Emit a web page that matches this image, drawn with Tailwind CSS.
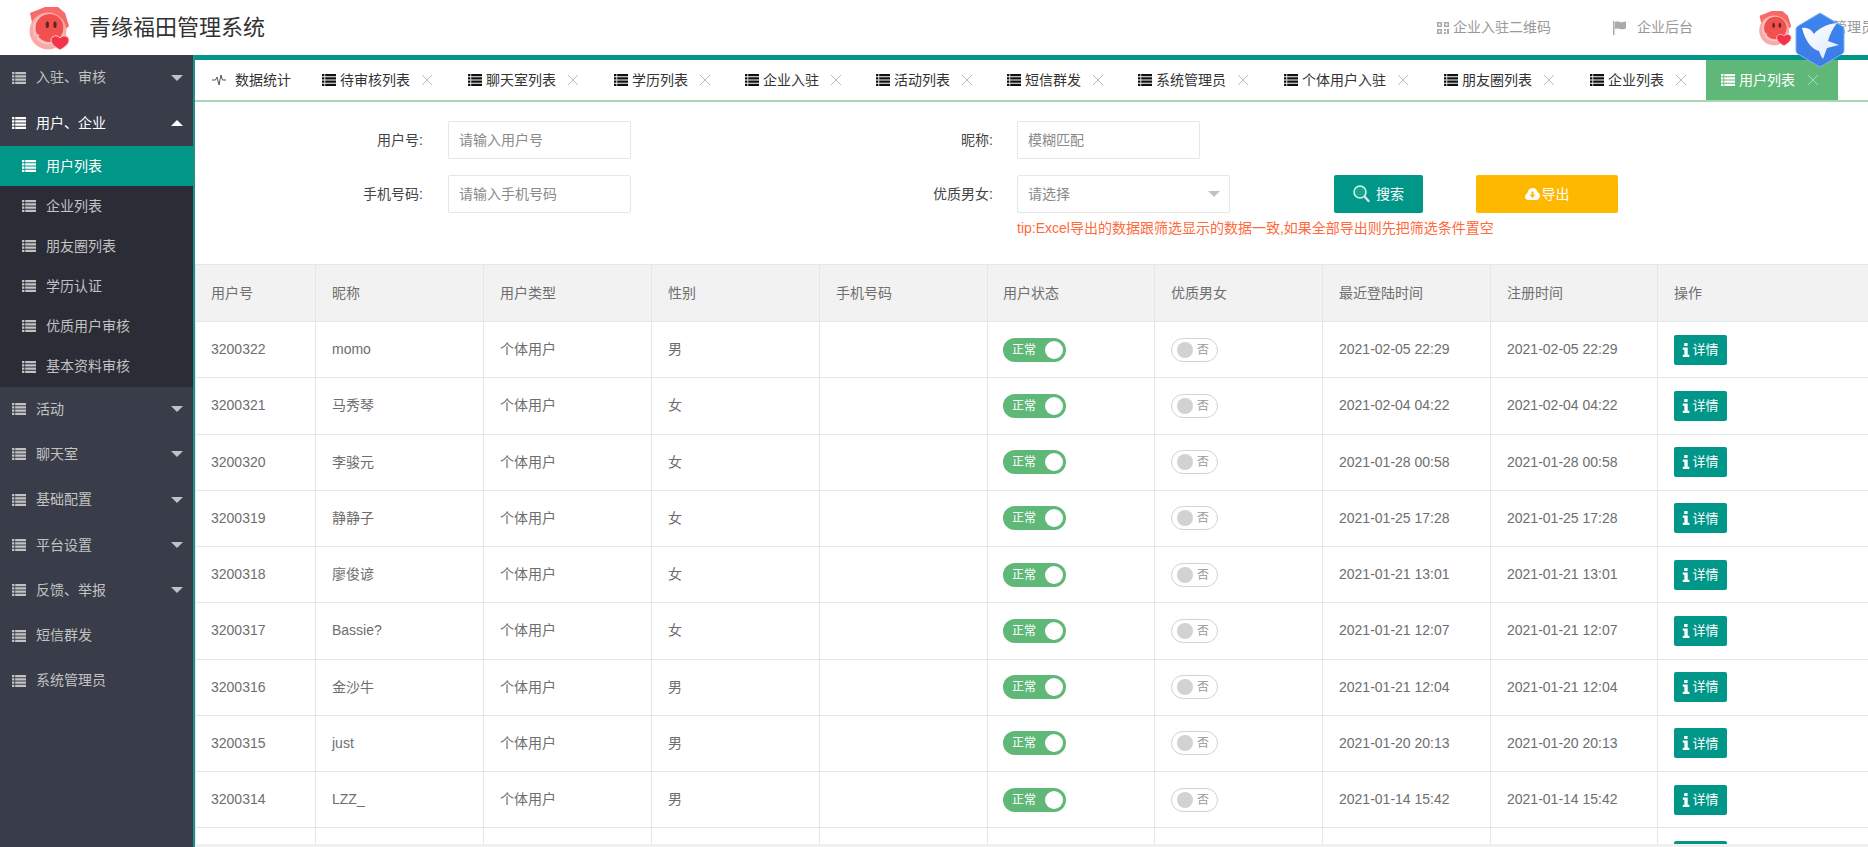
<!DOCTYPE html>
<html lang="zh">
<head>
<meta charset="utf-8">
<title>青缘福田管理系统</title>
<script src="https://cdn.jsdelivr.net/npm/@tailwindcss/browser@4"></script>
</head>
<body class="m-0 bg-white">
<svg class="hidden" width="0" height="0">
  <symbol id="list" viewBox="0 0 14 12"><path fill="currentColor" d="M0 0h2.400v2.200H0zM3.200 0H14v2.200H3.200zM0 3.200h2.400v2.200H0zM3.200 3.200H14v2.200H3.200zM0 6.500h2.400v2.200H0zM3.200 6.500H14v2.200H3.200zM0 9.700h2.400V12H0zM3.200 9.700H14V12H3.200z"/></symbol>
  <symbol id="info" viewBox="0 0 8 14"><path fill="currentColor" d="M2.200 0h3.400v3H2.200zM.8 4.600h4.900v7.200H7.400V14H.8v-2.200h1.600V6.800H.8z"/></symbol>
  <symbol id="logo" viewBox="0 0 42 44">
    <path fill="#f76a6a" d="M2 7 17 1h13l7 6 4 13-6 6H6z"/>
    <circle cx="20" cy="25" r="18.500" fill="#fba8a8"/>
    <circle cx="20.500" cy="23" r="15.500" fill="#f9c6c6"/>
    <circle cx="21.500" cy="22" r="14" fill="#f24f4f"/>
    <circle cx="9" cy="30" r="2.200" fill="#fbb4b4"/>
    <ellipse cx="19.300" cy="18.700" rx="1.600" ry="3.200" fill="#5a2626"/>
    <ellipse cx="27" cy="18.700" rx="1.600" ry="3.200" fill="#5a2626"/>
    <path fill="#f2334a" stroke="#ffd0d0" d="M32 44c-5-3-9-6-9-10 0-4 6-6 9-2 3-4 9-2 9 2 0 4-4 7-9 10z"/>
  </symbol>
</svg>
<div class="w-[1868px] h-[847px] overflow-hidden relative flex flex-col text-[14px] text-[#6e6e6e] font-['Liberation_Sans','Noto_Sans_CJK_SC',sans-serif]">

  <!-- header -->
  <header class="h-[55px] shrink-0 flex items-center bg-white">
    <svg class="w-[42px] h-[44px] ml-[28px]"><use href="#logo"/></svg>
    <h1 class="ml-[19px] text-[22px] leading-none font-normal text-[#333]">青缘福田管理系统</h1>
    <div class="ml-auto flex items-center text-[#999]">
      <svg class="w-[12px] h-[12px]" viewBox="0 0 12 12"><path fill="#aaa" d="M0 0h5v5H0zM7 0h5v5H7zM0 7h5v5H0zM7 7h2v2H7zM10 7h2v5h-2zM7 10h2v2H7z"/><path fill="#fff" d="M1.500 1.500h2v2h-2zM8.500 1.500h2v2h-2zM1.500 8.500h2v2h-2z"/></svg>
      <span class="ml-[4px]">企业入驻二维码</span>
      <svg class="ml-[61px] w-[15px] h-[14px]" viewBox="0 0 15 14"><path fill="#aaa" d="M1 0h1.500v14H1zM3 1c3-1.500 5 1 8 0l3-.500v7c-3 1.500-6 .5-8 0-1-.2-2 0-3 .5z"/></svg>
      <span class="ml-[10px]">企业后台</span>
      <svg class="ml-[65px] w-[34px] h-[36px]"><use href="#logo"/></svg>
      <span class="ml-[41px] w-[35px] whitespace-nowrap">管理员</span>
    </div>
  </header>

  <div class="flex-1 flex min-h-0">
    <!-- sidebar -->
    <aside class="w-[195px] shrink-0 bg-[#393d49] border-r-2 border-[#1f8f88] text-[#c2c2c2]">
      <a class="h-[45.4px] flex items-center pl-[12px] pr-[10px] gap-[10px]"><svg class="w-[14px] h-[12px]"><use href="#list"/></svg><span>入驻、审核</span><span class="ml-auto w-0 h-0 border-x-[6px] border-x-transparent border-t-[6px] border-t-[#c2c2c2]"></span></a>
      <a class="h-[45.6px] flex items-center pl-[12px] pr-[10px] gap-[10px] text-white"><svg class="w-[14px] h-[12px]"><use href="#list"/></svg><span>用户、企业</span><span class="ml-auto w-0 h-0 border-x-[6px] border-x-transparent border-b-[6px] border-b-white"></span></a>
      <div class="bg-[#2a2c36]">
        <a class="h-[40.1px] flex items-center pl-[22px] gap-[10px] bg-[#009688] text-white"><svg class="w-[14px] h-[12px]"><use href="#list"/></svg><span>用户列表</span></a>
        <a class="h-[40.1px] flex items-center pl-[22px] gap-[10px]"><svg class="w-[14px] h-[12px]"><use href="#list"/></svg><span>企业列表</span></a>
        <a class="h-[40.1px] flex items-center pl-[22px] gap-[10px]"><svg class="w-[14px] h-[12px]"><use href="#list"/></svg><span>朋友圈列表</span></a>
        <a class="h-[40.1px] flex items-center pl-[22px] gap-[10px]"><svg class="w-[14px] h-[12px]"><use href="#list"/></svg><span>学历认证</span></a>
        <a class="h-[40.1px] flex items-center pl-[22px] gap-[10px]"><svg class="w-[14px] h-[12px]"><use href="#list"/></svg><span>优质用户审核</span></a>
        <a class="h-[40.1px] flex items-center pl-[22px] gap-[10px]"><svg class="w-[14px] h-[12px]"><use href="#list"/></svg><span>基本资料审核</span></a>
      </div>
      <a class="h-[45.3px] flex items-center pl-[12px] pr-[10px] gap-[10px]"><svg class="w-[14px] h-[12px]"><use href="#list"/></svg><span>活动</span><span class="ml-auto w-0 h-0 border-x-[6px] border-x-transparent border-t-[6px] border-t-[#c2c2c2]"></span></a>
      <a class="h-[45.3px] flex items-center pl-[12px] pr-[10px] gap-[10px]"><svg class="w-[14px] h-[12px]"><use href="#list"/></svg><span>聊天室</span><span class="ml-auto w-0 h-0 border-x-[6px] border-x-transparent border-t-[6px] border-t-[#c2c2c2]"></span></a>
      <a class="h-[45.3px] flex items-center pl-[12px] pr-[10px] gap-[10px]"><svg class="w-[14px] h-[12px]"><use href="#list"/></svg><span>基础配置</span><span class="ml-auto w-0 h-0 border-x-[6px] border-x-transparent border-t-[6px] border-t-[#c2c2c2]"></span></a>
      <a class="h-[45.3px] flex items-center pl-[12px] pr-[10px] gap-[10px]"><svg class="w-[14px] h-[12px]"><use href="#list"/></svg><span>平台设置</span><span class="ml-auto w-0 h-0 border-x-[6px] border-x-transparent border-t-[6px] border-t-[#c2c2c2]"></span></a>
      <a class="h-[45.3px] flex items-center pl-[12px] pr-[10px] gap-[10px]"><svg class="w-[14px] h-[12px]"><use href="#list"/></svg><span>反馈、举报</span><span class="ml-auto w-0 h-0 border-x-[6px] border-x-transparent border-t-[6px] border-t-[#c2c2c2]"></span></a>
      <a class="h-[45.3px] flex items-center pl-[12px] gap-[10px]"><svg class="w-[14px] h-[12px]"><use href="#list"/></svg><span>短信群发</span></a>
      <a class="h-[45.3px] flex items-center pl-[12px] gap-[10px]"><svg class="w-[14px] h-[12px]"><use href="#list"/></svg><span>系统管理员</span></a>
    </aside>

    <main class="flex-1 min-w-0 flex flex-col border-t-[5px] border-[#009688]">
      <!-- tabs -->
      <nav class="h-[42px] shrink-0 flex border-b-2 border-[#a6d8b4] text-[#333] whitespace-nowrap">
        <div class="w-[112px] flex items-center pl-[17px] gap-[9px]"><svg class="w-[14px] h-[12px] text-[#555]" viewBox="0 0 14 12"><path fill="none" stroke="currentColor" d="M0 6h3.500l1.500-3 2 8 2-10 1.500 5H14"/></svg><span>数据统计</span></div>
        <div class="w-[146px] flex items-center pl-[15px] gap-[4px]"><svg class="w-[14px] h-[12px] text-[#111]"><use href="#list"/></svg><span>待审核列表</span><svg class="w-[10px] h-[10px] ml-[8px] text-[#bbb]" viewBox="0 0 10 10"><path stroke="currentColor" d="M0 0l10 10M10 0 0 10"/></svg></div>
        <div class="w-[146px] flex items-center pl-[15px] gap-[4px]"><svg class="w-[14px] h-[12px] text-[#111]"><use href="#list"/></svg><span>聊天室列表</span><svg class="w-[10px] h-[10px] ml-[8px] text-[#bbb]" viewBox="0 0 10 10"><path stroke="currentColor" d="M0 0l10 10M10 0 0 10"/></svg></div>
        <div class="w-[131px] flex items-center pl-[15px] gap-[4px]"><svg class="w-[14px] h-[12px] text-[#111]"><use href="#list"/></svg><span>学历列表</span><svg class="w-[10px] h-[10px] ml-[8px] text-[#bbb]" viewBox="0 0 10 10"><path stroke="currentColor" d="M0 0l10 10M10 0 0 10"/></svg></div>
        <div class="w-[131px] flex items-center pl-[15px] gap-[4px]"><svg class="w-[14px] h-[12px] text-[#111]"><use href="#list"/></svg><span>企业入驻</span><svg class="w-[10px] h-[10px] ml-[8px] text-[#bbb]" viewBox="0 0 10 10"><path stroke="currentColor" d="M0 0l10 10M10 0 0 10"/></svg></div>
        <div class="w-[131px] flex items-center pl-[15px] gap-[4px]"><svg class="w-[14px] h-[12px] text-[#111]"><use href="#list"/></svg><span>活动列表</span><svg class="w-[10px] h-[10px] ml-[8px] text-[#bbb]" viewBox="0 0 10 10"><path stroke="currentColor" d="M0 0l10 10M10 0 0 10"/></svg></div>
        <div class="w-[131px] flex items-center pl-[15px] gap-[4px]"><svg class="w-[14px] h-[12px] text-[#111]"><use href="#list"/></svg><span>短信群发</span><svg class="w-[10px] h-[10px] ml-[8px] text-[#bbb]" viewBox="0 0 10 10"><path stroke="currentColor" d="M0 0l10 10M10 0 0 10"/></svg></div>
        <div class="w-[146px] flex items-center pl-[15px] gap-[4px]"><svg class="w-[14px] h-[12px] text-[#111]"><use href="#list"/></svg><span>系统管理员</span><svg class="w-[10px] h-[10px] ml-[8px] text-[#bbb]" viewBox="0 0 10 10"><path stroke="currentColor" d="M0 0l10 10M10 0 0 10"/></svg></div>
        <div class="w-[160px] flex items-center pl-[15px] gap-[4px]"><svg class="w-[14px] h-[12px] text-[#111]"><use href="#list"/></svg><span>个体用户入驻</span><svg class="w-[10px] h-[10px] ml-[8px] text-[#bbb]" viewBox="0 0 10 10"><path stroke="currentColor" d="M0 0l10 10M10 0 0 10"/></svg></div>
        <div class="w-[146px] flex items-center pl-[15px] gap-[4px]"><svg class="w-[14px] h-[12px] text-[#111]"><use href="#list"/></svg><span>朋友圈列表</span><svg class="w-[10px] h-[10px] ml-[8px] text-[#bbb]" viewBox="0 0 10 10"><path stroke="currentColor" d="M0 0l10 10M10 0 0 10"/></svg></div>
        <div class="w-[131px] flex items-center pl-[15px] gap-[4px]"><svg class="w-[14px] h-[12px] text-[#111]"><use href="#list"/></svg><span>企业列表</span><svg class="w-[10px] h-[10px] ml-[8px] text-[#bbb]" viewBox="0 0 10 10"><path stroke="currentColor" d="M0 0l10 10M10 0 0 10"/></svg></div>
        <div class="w-[132px] h-[40px] flex items-center pl-[15px] gap-[4px] bg-[#5fb878] text-white"><svg class="w-[14px] h-[12px]"><use href="#list"/></svg><span>用户列表</span><svg class="w-[10px] h-[10px] ml-[9px] text-[#a9dcb8]" viewBox="0 0 10 10"><path stroke="currentColor" d="M0 0l10 10M10 0 0 10"/></svg></div>
      </nav>

      <div class="flex-1 min-h-0 overflow-hidden">
        <!-- filter form -->
        <form class="h-[162px] pt-[19px]">
          <div class="flex items-center h-[38px]">
            <label class="w-[228px] text-right text-[#444]">用户号:</label>
            <input class="ml-[25px] w-[183px] h-[38px] px-[10px] border border-[#e6e6e6] rounded-[2px] outline-none placeholder:text-[#8a8a8a]" placeholder="请输入用户号">
            <label class="w-[362px] text-right text-[#444]">昵称:</label>
            <input class="ml-[24px] w-[183px] h-[38px] px-[10px] border border-[#e6e6e6] rounded-[2px] outline-none placeholder:text-[#8a8a8a]" placeholder="模糊匹配">
          </div>
          <div class="flex items-center h-[38px] mt-[16px]">
            <label class="w-[228px] text-right text-[#444]">手机号码:</label>
            <input class="ml-[25px] w-[183px] h-[38px] px-[10px] border border-[#e6e6e6] rounded-[2px] outline-none placeholder:text-[#8a8a8a]" placeholder="请输入手机号码">
            <label class="w-[362px] text-right text-[#444]">优质男女:</label>
            <div class="ml-[24px] w-[213px] h-[38px] px-[10px] pr-[9px] flex items-center justify-between border border-[#e6e6e6] rounded-[2px] text-[#8a8a8a]"><span>请选择</span><span class="w-0 h-0 border-x-[6px] border-x-transparent border-t-[6px] border-t-[#c2c2c2]"></span></div>
            <button type="button" class="ml-[104px] w-[89px] h-[38px] flex items-center justify-center gap-[6px] bg-[#009688] rounded-[2px] text-white"><svg class="w-[17px] h-[18px]" viewBox="0 0 17 18"><circle cx="7" cy="7" r="6" fill="#14a594" stroke="#d8f0ec" stroke-width="1.600"/><path stroke="#cfeee8" stroke-width="2.400" stroke-linecap="round" d="M12 12l3.500 4"/></svg><span>搜索</span></button>
            <button type="button" class="ml-[53px] w-[142px] h-[38px] flex items-center justify-center gap-[2px] bg-[#ffb800] rounded-[2px] text-white"><svg class="w-[15px] h-[12px]" viewBox="0 0 15 12"><path fill="#fff" d="M3.500 12C1.500 12 0 10.500 0 8.700 0 7.200 1 6 2.300 5.600 2.500 3 4.500 0 7.800 0c2.500 0 4.400 1.800 4.700 4.200 1.500.4 2.500 1.800 2.500 3.500C15 10 13.200 12 11 12z"/><path fill="#ffb800" d="M6.500 3.500h2v3.200h2L7.500 10 4.500 6.700h2z"/></svg><span>导出</span></button>
          </div>
          <p class="ml-[822px] mt-[5px] h-[20px] leading-[20px] text-[#ff6a3c] whitespace-nowrap">tip:Excel导出的数据跟筛选显示的数据一致,如果全部导出则先把筛选条件置空</p>
        </form>

        <!-- table -->
        <table class="w-[1673px] table-fixed border-collapse [&_th]:h-[57px] [&_th]:bg-[#f2f2f2] [&_th]:font-normal [&_th]:text-left [&_th]:pl-[16px] [&_th:first-child]:pl-[15px] [&_th:nth-child(6)]:pl-[15px] [&_th]:border [&_th]:border-[#e6e6e6] [&_td]:h-[56.25px] [&_td]:pl-[16px] [&_td:first-child]:pl-[15px] [&_td:nth-child(6)]:pl-[15px] [&_td]:border [&_td]:border-[#e6e6e6]">
          <colgroup><col class="w-[120px]"><col class="w-[168px]"><col class="w-[168px]"><col class="w-[168px]"><col class="w-[168px]"><col class="w-[167px]"><col class="w-[168px]"><col class="w-[168px]"><col class="w-[167px]"><col class="w-[211px]"></colgroup>
          <thead><tr><th>用户号</th><th>昵称</th><th>用户类型</th><th>性别</th><th>手机号码</th><th>用户状态</th><th>优质男女</th><th>最近登陆时间</th><th>注册时间</th><th>操作</th></tr></thead>
          <tbody>
            <tr><td>3200322</td><td>momo</td><td>个体用户</td><td>男</td><td></td><td><span class="w-[63px] h-[24px] rounded-full bg-[#5fb878] flex items-center justify-between pl-[9px] pr-[3px] text-white text-[12px]">正常<i class="w-[18px] h-[18px] rounded-full bg-white"></i></span></td><td><span class="w-[47px] h-[24px] rounded-full border border-[#d2d2d2] flex items-center justify-between pl-[5px] pr-[8px] text-[#999] text-[12px]"><i class="w-[16px] h-[16px] rounded-full bg-[#d2d2d2]"></i>否</span></td><td>2021-02-05 22:29</td><td>2021-02-05 22:29</td><td><a class="w-[53px] h-[30px] rounded-[2px] bg-[#009688] text-white text-[13px] flex items-center justify-center gap-[2px]"><svg class="w-[8px] h-[14px]"><use href="#info"/></svg>详情</a></td></tr>
            <tr><td>3200321</td><td>马秀琴</td><td>个体用户</td><td>女</td><td></td><td><span class="w-[63px] h-[24px] rounded-full bg-[#5fb878] flex items-center justify-between pl-[9px] pr-[3px] text-white text-[12px]">正常<i class="w-[18px] h-[18px] rounded-full bg-white"></i></span></td><td><span class="w-[47px] h-[24px] rounded-full border border-[#d2d2d2] flex items-center justify-between pl-[5px] pr-[8px] text-[#999] text-[12px]"><i class="w-[16px] h-[16px] rounded-full bg-[#d2d2d2]"></i>否</span></td><td>2021-02-04 04:22</td><td>2021-02-04 04:22</td><td><a class="w-[53px] h-[30px] rounded-[2px] bg-[#009688] text-white text-[13px] flex items-center justify-center gap-[2px]"><svg class="w-[8px] h-[14px]"><use href="#info"/></svg>详情</a></td></tr>
            <tr><td>3200320</td><td>李骏元</td><td>个体用户</td><td>女</td><td></td><td><span class="w-[63px] h-[24px] rounded-full bg-[#5fb878] flex items-center justify-between pl-[9px] pr-[3px] text-white text-[12px]">正常<i class="w-[18px] h-[18px] rounded-full bg-white"></i></span></td><td><span class="w-[47px] h-[24px] rounded-full border border-[#d2d2d2] flex items-center justify-between pl-[5px] pr-[8px] text-[#999] text-[12px]"><i class="w-[16px] h-[16px] rounded-full bg-[#d2d2d2]"></i>否</span></td><td>2021-01-28 00:58</td><td>2021-01-28 00:58</td><td><a class="w-[53px] h-[30px] rounded-[2px] bg-[#009688] text-white text-[13px] flex items-center justify-center gap-[2px]"><svg class="w-[8px] h-[14px]"><use href="#info"/></svg>详情</a></td></tr>
            <tr><td>3200319</td><td>静静子</td><td>个体用户</td><td>女</td><td></td><td><span class="w-[63px] h-[24px] rounded-full bg-[#5fb878] flex items-center justify-between pl-[9px] pr-[3px] text-white text-[12px]">正常<i class="w-[18px] h-[18px] rounded-full bg-white"></i></span></td><td><span class="w-[47px] h-[24px] rounded-full border border-[#d2d2d2] flex items-center justify-between pl-[5px] pr-[8px] text-[#999] text-[12px]"><i class="w-[16px] h-[16px] rounded-full bg-[#d2d2d2]"></i>否</span></td><td>2021-01-25 17:28</td><td>2021-01-25 17:28</td><td><a class="w-[53px] h-[30px] rounded-[2px] bg-[#009688] text-white text-[13px] flex items-center justify-center gap-[2px]"><svg class="w-[8px] h-[14px]"><use href="#info"/></svg>详情</a></td></tr>
            <tr><td>3200318</td><td>廖俊谚</td><td>个体用户</td><td>女</td><td></td><td><span class="w-[63px] h-[24px] rounded-full bg-[#5fb878] flex items-center justify-between pl-[9px] pr-[3px] text-white text-[12px]">正常<i class="w-[18px] h-[18px] rounded-full bg-white"></i></span></td><td><span class="w-[47px] h-[24px] rounded-full border border-[#d2d2d2] flex items-center justify-between pl-[5px] pr-[8px] text-[#999] text-[12px]"><i class="w-[16px] h-[16px] rounded-full bg-[#d2d2d2]"></i>否</span></td><td>2021-01-21 13:01</td><td>2021-01-21 13:01</td><td><a class="w-[53px] h-[30px] rounded-[2px] bg-[#009688] text-white text-[13px] flex items-center justify-center gap-[2px]"><svg class="w-[8px] h-[14px]"><use href="#info"/></svg>详情</a></td></tr>
            <tr><td>3200317</td><td>Bassie?</td><td>个体用户</td><td>女</td><td></td><td><span class="w-[63px] h-[24px] rounded-full bg-[#5fb878] flex items-center justify-between pl-[9px] pr-[3px] text-white text-[12px]">正常<i class="w-[18px] h-[18px] rounded-full bg-white"></i></span></td><td><span class="w-[47px] h-[24px] rounded-full border border-[#d2d2d2] flex items-center justify-between pl-[5px] pr-[8px] text-[#999] text-[12px]"><i class="w-[16px] h-[16px] rounded-full bg-[#d2d2d2]"></i>否</span></td><td>2021-01-21 12:07</td><td>2021-01-21 12:07</td><td><a class="w-[53px] h-[30px] rounded-[2px] bg-[#009688] text-white text-[13px] flex items-center justify-center gap-[2px]"><svg class="w-[8px] h-[14px]"><use href="#info"/></svg>详情</a></td></tr>
            <tr><td>3200316</td><td>金沙牛</td><td>个体用户</td><td>男</td><td></td><td><span class="w-[63px] h-[24px] rounded-full bg-[#5fb878] flex items-center justify-between pl-[9px] pr-[3px] text-white text-[12px]">正常<i class="w-[18px] h-[18px] rounded-full bg-white"></i></span></td><td><span class="w-[47px] h-[24px] rounded-full border border-[#d2d2d2] flex items-center justify-between pl-[5px] pr-[8px] text-[#999] text-[12px]"><i class="w-[16px] h-[16px] rounded-full bg-[#d2d2d2]"></i>否</span></td><td>2021-01-21 12:04</td><td>2021-01-21 12:04</td><td><a class="w-[53px] h-[30px] rounded-[2px] bg-[#009688] text-white text-[13px] flex items-center justify-center gap-[2px]"><svg class="w-[8px] h-[14px]"><use href="#info"/></svg>详情</a></td></tr>
            <tr><td>3200315</td><td>just</td><td>个体用户</td><td>男</td><td></td><td><span class="w-[63px] h-[24px] rounded-full bg-[#5fb878] flex items-center justify-between pl-[9px] pr-[3px] text-white text-[12px]">正常<i class="w-[18px] h-[18px] rounded-full bg-white"></i></span></td><td><span class="w-[47px] h-[24px] rounded-full border border-[#d2d2d2] flex items-center justify-between pl-[5px] pr-[8px] text-[#999] text-[12px]"><i class="w-[16px] h-[16px] rounded-full bg-[#d2d2d2]"></i>否</span></td><td>2021-01-20 20:13</td><td>2021-01-20 20:13</td><td><a class="w-[53px] h-[30px] rounded-[2px] bg-[#009688] text-white text-[13px] flex items-center justify-center gap-[2px]"><svg class="w-[8px] h-[14px]"><use href="#info"/></svg>详情</a></td></tr>
            <tr><td>3200314</td><td>LZZ_</td><td>个体用户</td><td>男</td><td></td><td><span class="w-[63px] h-[24px] rounded-full bg-[#5fb878] flex items-center justify-between pl-[9px] pr-[3px] text-white text-[12px]">正常<i class="w-[18px] h-[18px] rounded-full bg-white"></i></span></td><td><span class="w-[47px] h-[24px] rounded-full border border-[#d2d2d2] flex items-center justify-between pl-[5px] pr-[8px] text-[#999] text-[12px]"><i class="w-[16px] h-[16px] rounded-full bg-[#d2d2d2]"></i>否</span></td><td>2021-01-14 15:42</td><td>2021-01-14 15:42</td><td><a class="w-[53px] h-[30px] rounded-[2px] bg-[#009688] text-white text-[13px] flex items-center justify-center gap-[2px]"><svg class="w-[8px] h-[14px]"><use href="#info"/></svg>详情</a></td></tr>
            <tr><td></td><td></td><td></td><td></td><td></td><td></td><td></td><td></td><td></td><td><a class="w-[53px] h-[30px] rounded-[2px] bg-[#009688] block"></a></td></tr>
          </tbody>
        </table>
      </div>
      <div class="h-[3px] shrink-0 bg-[#f0f0f0]"></div>
    </main>
  </div>

  <!-- floating bird badge over the page -->
  <svg class="absolute left-[1795px] top-[12px] w-[50px] h-[56px]" viewBox="0 0 50 56">
    <defs>
      <linearGradient id="hex" x1="0" y1="0" x2="0" y2="1"><stop offset="0" stop-color="#3b86ee"/><stop offset="1" stop-color="#3f7be8"/></linearGradient>
      <linearGradient id="bird" x1="0" y1="0" x2="1" y2="1"><stop offset="0" stop-color="#ffffff"/><stop offset="1" stop-color="#dfe9fb"/></linearGradient>
    </defs>
    <path fill="url(#hex)" stroke="#7fb1f5" stroke-width="1" stroke-linejoin="round" d="M25 1 47 14c1 .6 2 2 2 3.500v21c0 1.500-1 2.900-2 3.500L25 55 3 42c-1-.6-2-2-2-3.500v-21C1 16 2 14.600 3 14z"/>
    <path fill="url(#bird)" d="M7 16c5-1 9 1 12 6 5-6 13-10 23-11-4 5-7 11-9 18l11 4-12 3-4 11c-2-3-3-5-4-8-8-2-14-11-17-23z"/>
  </svg>
</div>
</body>
</html>
